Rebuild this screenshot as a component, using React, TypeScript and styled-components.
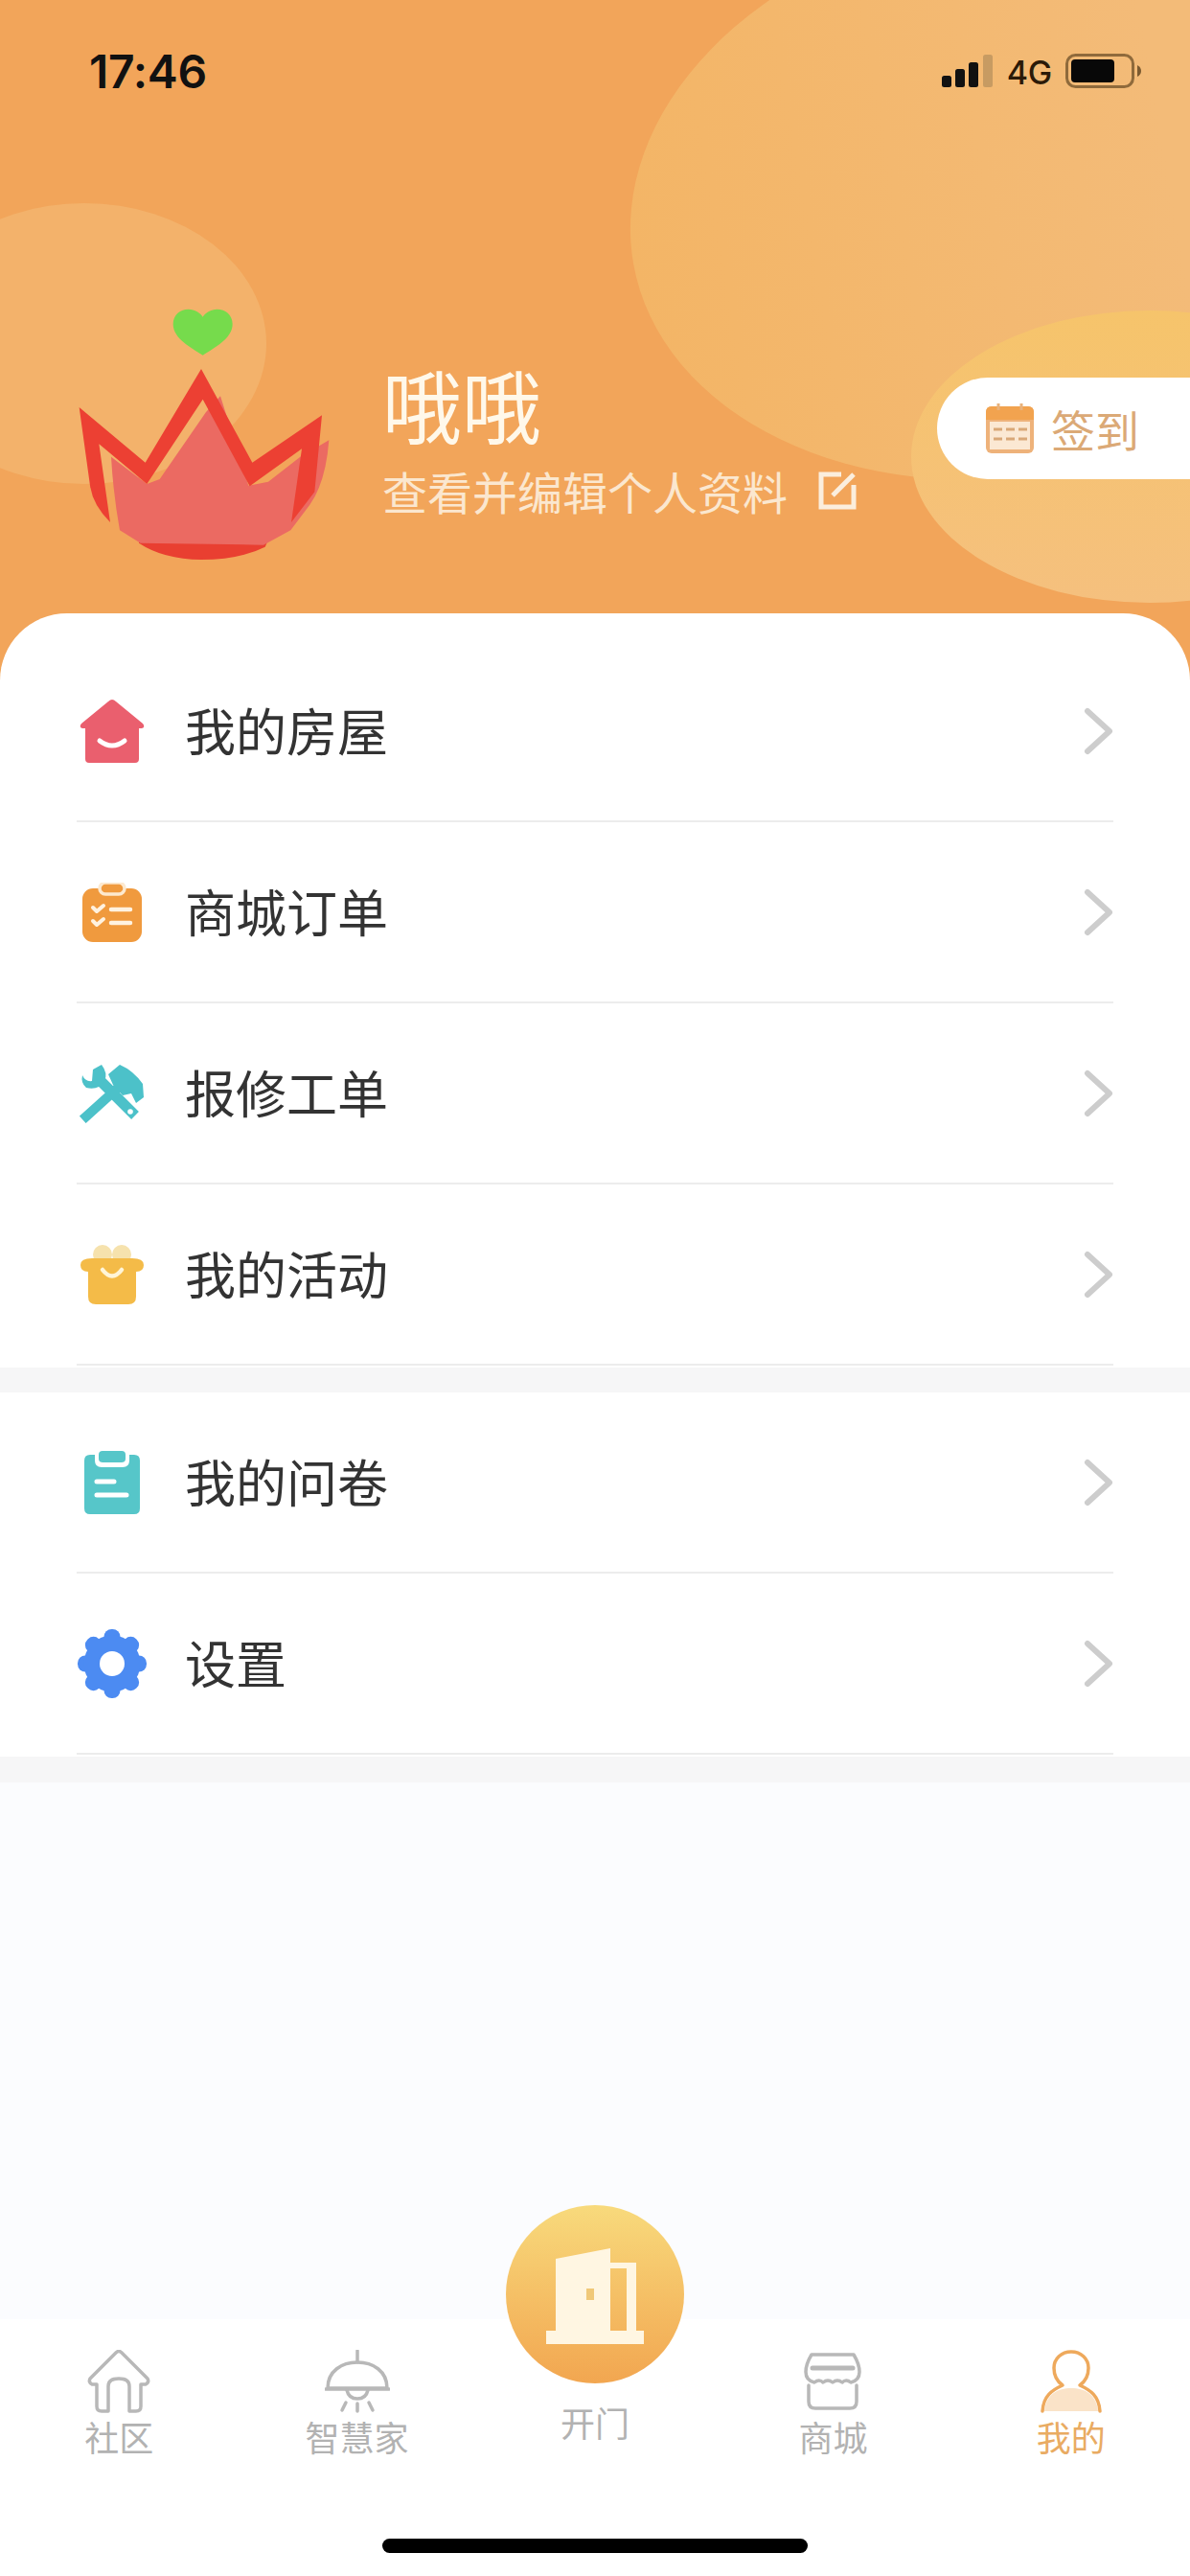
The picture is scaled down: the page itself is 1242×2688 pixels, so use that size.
import React from 'react';
import styled, { createGlobalStyle } from 'styled-components';

const Global = createGlobalStyle`
  html, body { margin: 0; padding: 0; background: #fff; }
  * { box-sizing: border-box; }
  body { font-family: "Noto Sans CJK SC", "Noto Sans", sans-serif; }
`;

const Page = styled.div`
  width: 1242px; height: 2688px; display: flex; flex-direction: column; overflow: hidden; background: #fff;
`;
const Header = styled.header`
  position: relative; height: 710px; flex: none; overflow: hidden; background: #f2a55a;
`;
const Blob = styled.div<{ $x: number; $y: number; $w: number; $h: number; $bg: string; $rot?: number }>`
  position: absolute; left: ${p => p.$x}px; top: ${p => p.$y}px; width: ${p => p.$w}px; height: ${p => p.$h}px;
  border-radius: 50%; background: ${p => p.$bg}; transform: rotate(${p => p.$rot ?? 0}deg);
`;
const StatusBar = styled.div`
  position: relative; height: 300px; padding: 50px 50px 0 93px; display: flex; align-items: flex-start; justify-content: space-between;
`;
const Time = styled.div`
  font: 600 48px/50px Inter, "Liberation Sans", sans-serif; color: #111; letter-spacing: -0.3px;
`;
const StatusIcons = styled.div`
  display: flex; align-items: center; gap: 14px; height: 50px; margin-top: -1px;
`;
const NetLabel = styled.span`
  font: 500 34px/36px Inter, "Liberation Sans", sans-serif; color: #2b1a08; margin-top: 3px; letter-spacing: -0.3px;
`;
const Hero = styled.div`
  position: relative; display: flex; align-items: flex-start; padding-left: 50px; gap: 29px;
`;
const Avatar = styled.svg`
  width: 320px; height: 300px; flex: none;
`;
const Info = styled.div`
  display: flex; flex-direction: column; gap: 16px; margin-top: 76px;
`;
const Name = styled.div`
  font-size: 83px; line-height: 90px; color: #fff8ea; font-weight: 400;
`;
const SubRow = styled.div`
  display: flex; align-items: center; gap: 32px; height: 60px;
`;
const Sub = styled.span`
  font-size: 47px; line-height: 60px; color: #fbe7cf;
`;
const SignButton = styled.div`
  margin-left: auto; margin-top: 94px; width: 264px; height: 106px; flex: none; background: #fff;
  border-radius: 53px 0 0 53px; display: flex; align-items: center; padding-left: 51px; gap: 18px;
`;
const SignText = styled.span`
  font-size: 46px; line-height: 56px; color: #dba976;
`;
const Sheet = styled.section`
  flex: none; margin-top: -70px; position: relative; background: #fff; border-radius: 70px 70px 0 0; padding-top: 29px;
`;
const Group = styled.div`
  padding: 0 80px 2px;
`;
const Row = styled.div`
  height: 189px; display: flex; align-items: center; border-bottom: 2px solid #ececec;
`;
const RowIcon = styled.div`
  width: 74px; height: 74px; margin-right: 39px; flex: none; display: flex; align-items: center; justify-content: center;
`;
const RowLabel = styled.span`
  flex: 1; font-size: 53px; line-height: 64px; color: #333; padding-bottom: 3px;
`;
const Band = styled.div<{ $h: number }>`
  height: ${p => p.$h}px; background: #f6f6f7;
`;
const Body = styled.div`
  flex: 1; background: #fbfcfe;
`;
const TabBar = styled.nav`
  flex: none; height: 268px; background: #fff; padding: 32px 0 24px; display: flex; flex-direction: column; align-items: center;
`;
const Tabs = styled.div`
  width: 100%; display: grid; grid-template-columns: repeat(5, 1fr); align-items: start;
`;
const Tab = styled.div`
  display: flex; flex-direction: column; align-items: center; gap: 6px;
`;
const TabLabel = styled.span<{ $active?: boolean }>`
  font-size: 36px; line-height: 36px; color: ${p => (p.$active ? '#e9ab62' : '#b2b2b2')};
`;
const CenterTab = styled.div`
  margin-top: -151px; display: flex; flex-direction: column; align-items: center; gap: 22px;
`;
const DoorButton = styled.div`
  width: 186px; height: 186px; border-radius: 50%; background: linear-gradient(180deg, #f8da7c 0%, #f2a650 100%);
  display: flex; align-items: center; justify-content: center; padding-top: 4px;
`;
const HomeBar = styled.div`
  margin-top: auto; width: 444px; height: 15px; border-radius: 8px; background: #000;
`;

const Chevron = () => (
  <svg width="31" height="50" viewBox="0 0 31 50" fill="none">
    <path d="M4 4 L27 25 L4 46" stroke="#cdcdcd" strokeWidth="6" strokeLinecap="round" strokeLinejoin="round" />
  </svg>
);

const HouseIcon = () => (
  <svg width="68" height="66" viewBox="0 0 68 66">
    <path d="M34 0 Q36 0 38 2 L66 25 Q69 29 65 30 L62 30 L62 62 Q62 66 58 66 L10 66 Q6 66 6 62 L6 30 L3 30 Q-1 29 2 25 L30 2 Q32 0 34 0Z" fill="#ea5f6e" />
    <path d="M21 43 Q34 53 47 43" stroke="#fff" strokeWidth="5" fill="none" strokeLinecap="round" />
  </svg>
);
const OrderIcon = () => (
  <svg width="62" height="62" viewBox="0 0 62 62">
    <rect x="0" y="6" width="62" height="56" rx="11" fill="#f09a3e" />
    <rect x="18" y="0" width="26" height="12" rx="6" fill="#f09a3e" stroke="#fde9cf" strokeWidth="3.5" />
    <path d="M11 26 L15 30 L22 24 M11 40 L15 44 L22 38" stroke="#fff2e0" strokeWidth="4" fill="none" strokeLinecap="round" strokeLinejoin="round" />
    <path d="M30 28 H50 M30 42 H50" stroke="#fff2e0" strokeWidth="4.5" strokeLinecap="round" />
  </svg>
);
const ToolsIcon = () => (
  <svg width="68" height="62" viewBox="0 0 68 62">
    <path d="M7 55 L38 27" stroke="#4cc1c9" strokeWidth="10" strokeLinecap="square" />
    <path d="M30 11 L42 1 Q56 7 66 21 L67 35 L59 41 L54 31 L45 33 L35 22Z" fill="#4cc1c9" />
    <path d="M22 18 L58 54" stroke="#4cc1c9" strokeWidth="11" />
    <path d="M3 12 Q6 19 13 18 L14 6 L23 1 Q30 10 26 18 Q20 28 7 25 Q1 20 3 12Z" fill="#4cc1c9" />
    <circle cx="53" cy="50" r="2.8" fill="#fff" />
  </svg>
);
const GiftIcon = () => (
  <svg width="66" height="62" viewBox="0 0 66 62">
    <circle cx="23" cy="10" r="10" fill="#f6e2ad" />
    <circle cx="43" cy="10" r="10" fill="#f6e2ad" />
    <path d="M12 14 H54 Q66 14 66 21 Q66 28 58 28 V54 Q58 62 50 62 H16 Q8 62 8 54 V28 Q0 28 0 21 Q0 14 12 14Z" fill="#f4bb48" />
    <path d="M23 26 Q33 39 43 26" stroke="#fff5d8" strokeWidth="4.5" fill="none" strokeLinecap="round" />
  </svg>
);
const SurveyIcon = () => (
  <svg width="58" height="66" viewBox="0 0 58 66">
    <path d="M6 4 H11 V10 Q11 17 18 17 H40 Q47 17 47 10 V4 H52 Q58 4 58 10 V60 Q58 66 52 66 H6 Q0 66 0 60 V10 Q0 4 6 4Z" fill="#56c6c9" />
    <rect x="15" y="0" width="28" height="12" rx="4" fill="#56c6c9" />
    <path d="M13 32 H31 M13 46 H44" stroke="#fff" strokeWidth="5" strokeLinecap="round" />
  </svg>
);
const GearIcon = () => {
  const teeth = [0, 45, 90, 135, 180, 225, 270, 315];
  return (
    <svg width="72" height="72" viewBox="0 0 72 72">
      {teeth.map(a => (
        <rect key={a} x="27.5" y="0" width="17" height="16" rx="8" fill="#4c8bf2" transform={`rotate(${a} 36 36)`} />
      ))}
      <circle cx="36" cy="36" r="29.5" fill="#4c8bf2" />
      <circle cx="36" cy="36" r="13" fill="#fff" />
    </svg>
  );
};

const HomeTab = () => (
  <svg width="66" height="66" viewBox="0 0 66 66" fill="none" stroke="#b8b8b8" strokeWidth="3.5" strokeLinejoin="round" strokeLinecap="round">
    <path d="M10 36 L5 36 Q1 34 3 30 L30 3 Q33 0 36 3 L63 30 Q65 34 61 36 L56 36 L56 59 Q56 64 51 64 L44 64 L44 38 Q44 30 33 30 Q22 30 22 38 L22 64 L15 64 Q10 64 10 59Z" />
  </svg>
);
const LampTab = () => (
  <svg width="68" height="66" viewBox="0 0 68 66" fill="none" stroke="#b8b8b8" strokeWidth="3.5" strokeLinecap="round" strokeLinejoin="round">
    <path d="M34 1 V13" />
    <path d="M3 40 C3 22 18 13 34 13 C50 13 65 22 65 40 Z" />
    <path d="M1 41 H67" />
    <path d="M23 42 Q25 51 34 51 Q43 51 45 42" />
    <path d="M34 56 V64 M22 55 L18 63 M46 55 L50 63" />
  </svg>
);
const StoreTab = () => (
  <svg width="60" height="66" viewBox="0 -3 60 66" fill="none" stroke="#b8b8b8" strokeWidth="3.5" strokeLinecap="round" strokeLinejoin="round">
    <path d="M8 2 H52 Q58 12 58 20 Q58 29 49 31 Q44 27 40 31 Q35 27 30 31 Q25 27 20 31 Q16 27 11 31 Q2 29 2 20 Q2 12 8 2Z" />
    <path d="M9 16 H51" strokeWidth="5" />
    <path d="M5 34 V51 Q5 58 12 58 H48 Q55 58 55 51 V34" />
  </svg>
);
const PersonTab = () => (
  <svg width="64" height="66" viewBox="0 0 64 66" fill="none">
    <path d="M4 64 C6 46 18 40 32 40 C46 40 58 46 60 64 Z" fill="#fae3c8" />
    <path d="M2 64 C3 48 12 42 23 37 C16 32 14 26 14 19 C14 9 22 2 32 2 C42 2 50 9 50 19 C50 26 48 32 41 37 C52 42 61 48 62 64" stroke="#eea95c" strokeWidth="3.5" strokeLinecap="round" strokeLinejoin="round" />
  </svg>
);
const DoorIcon = () => (
  <svg width="102" height="100" viewBox="0 0 102 100">
    <path d="M10 11 L67 0 V88 H10Z" fill="#fff6e2" />
    <path d="M67 15 H94 V88 H84 V21 H67Z" fill="#fff6e2" />
    <path d="M0 86 H102 V100 H0Z" fill="#fff6e2" />
    <rect x="42" y="42" width="8" height="12" fill="#f0c878" />
  </svg>
);

const rowsA: [string, React.ReactNode][] = [
  ['我的房屋', <HouseIcon />],
  ['商城订单', <OrderIcon />],
  ['报修工单', <ToolsIcon />],
  ['我的活动', <GiftIcon />],
];
const rowsB: [string, React.ReactNode][] = [
  ['我的问卷', <SurveyIcon />],
  ['设置', <GearIcon />],
];

const MenuGroup = ({ rows }: { rows: [string, React.ReactNode][] }) => (
  <Group>
    {rows.map(([label, icon]) => (
      <Row key={label}>
        <RowIcon>{icon}</RowIcon>
        <RowLabel>{label}</RowLabel>
        <Chevron />
      </Row>
    ))}
  </Group>
);

export default function App() {
  return (
    <Page>
      <Global />
      <Header>
        <Blob $x={655} $y={-87} $w={810} $h={584} $rot={-10} $bg="linear-gradient(90deg,#f3b566 0%,#f3bb78 70%)" />
        <Blob $x={-102} $y={212} $w={380} $h={293} $bg="#f3b26b" />
        <Blob $x={951} $y={324} $w={498} $h={305} $bg="linear-gradient(180deg,#f6c46b 0%,#f5c07e 100%)" />
        <StatusBar>
          <Time>17:46</Time>
          <StatusIcons>
            <svg width="54" height="34" viewBox="0 0 54 34">
              <rect x="0" y="22" width="10" height="12" rx="2.5" fill="#111" />
              <rect x="14" y="15" width="10" height="19" rx="2.5" fill="#111" />
              <rect x="28" y="8" width="10" height="26" rx="2.5" fill="#111" />
              <rect x="43" y="0" width="10" height="34" rx="2.5" fill="#c79b62" />
            </svg>
            <NetLabel>4G</NetLabel>
            <svg width="80" height="36" viewBox="0 0 80 36">
              <rect x="1.5" y="1.5" width="69" height="33" rx="9" fill="none" stroke="#8f6a3b" strokeWidth="3" />
              <rect x="6" y="6" width="45" height="24" rx="4" fill="#080808" />
              <path d="M75 12 Q79 14 79 18 Q79 22 75 24Z" fill="#7b5a30" />
            </svg>
          </StatusIcons>
        </StatusBar>
        <Hero>
          <Avatar viewBox="0 0 960 900">
            <path d="M485 212 C450 190 392 160 392 115 C392 85 415 68 440 68 C460 68 478 80 485 92 C492 80 510 68 530 68 C555 68 578 85 578 115 C578 160 520 190 485 212Z" fill="#76db4c" />
            <path d="M285 790 L690 790 L680 812 Q600 852 480 852 Q360 850 285 800Z" fill="#e93f31" />
            <path d="M198 530 L310 615 L350 600 L495 390 L540 340 L628 620 L690 608 L790 530 L880 478 Q870 610 820 680 L760 760 L675 806 L290 800 L225 760 Q205 650 198 530Z" fill="#eb6a62" />
            <path d="M98 375 L305 548 L480 255 L640 548 L858 400 L835 640 L762 735 L795 505 L632 622 L485 350 L310 615 L160 490 L195 735 Q140 680 132 620Z" fill="#ec4033" />
          </Avatar>
          <Info>
            <Name>哦哦</Name>
            <SubRow>
              <Sub>查看并编辑个人资料</Sub>
              <svg width="40" height="40" viewBox="0 0 40 40" fill="none" stroke="#fbeedd" strokeWidth="5">
                <path d="M24 3 H3 V37 H37 V14" />
                <path d="M15 25 L37 3" />
              </svg>
            </SubRow>
          </Info>
          <SignButton>
            <svg width="50" height="52" viewBox="0 0 50 52">
              <rect x="0" y="3" width="50" height="49" rx="6" fill="#eeb27a" />
              <path d="M0 9 Q0 3 6 3 H44 Q50 3 50 9 V17 H0Z" fill="#f2a34f" />
              <rect x="4" y="19" width="42" height="29" fill="#fbe8d3" />
              <path d="M13 0 V7 M37 0 V7" stroke="#e8b27c" strokeWidth="3" />
              <path d="M8 27 H17 M21 27 H30 M34 27 H43 M8 37 H17 M21 37 H30 M34 37 H43" stroke="#d9a878" strokeWidth="3" />
            </svg>
            <SignText>签到</SignText>
          </SignButton>
        </Hero>
      </Header>
      <Sheet>
        <MenuGroup rows={rowsA} />
        <Band $h={26} />
        <MenuGroup rows={rowsB} />
        <Band $h={27} />
      </Sheet>
      <Body />
      <TabBar>
        <Tabs>
          <Tab><HomeTab /><TabLabel>社区</TabLabel></Tab>
          <Tab><LampTab /><TabLabel>智慧家</TabLabel></Tab>
          <CenterTab>
            <DoorButton><DoorIcon /></DoorButton>
            <TabLabel>开门</TabLabel>
          </CenterTab>
          <Tab><StoreTab /><TabLabel>商城</TabLabel></Tab>
          <Tab><PersonTab /><TabLabel $active>我的</TabLabel></Tab>
        </Tabs>
        <HomeBar />
      </TabBar>
    </Page>
  );
}
